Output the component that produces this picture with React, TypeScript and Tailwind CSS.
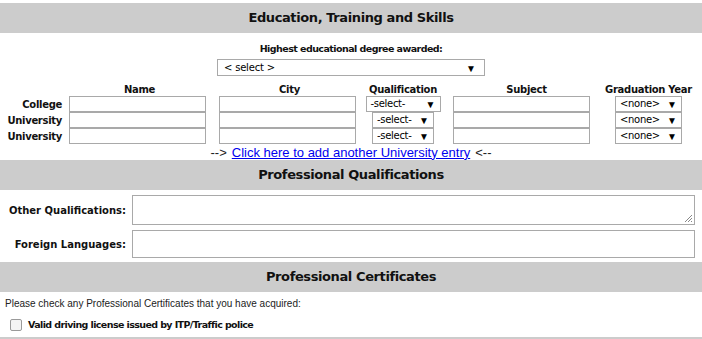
import React from "react";

const F = { fontFamily: '"DejaVu Sans", Verdana, sans-serif' };

function Header({ title }: { title: string }) {
  return (
    <div className="h-[30px] bg-[#cccccc] flex items-center justify-center">
      <span className="text-[13px] font-bold tracking-[-0.4px] text-[#111]" style={F}>{title}</span>
    </div>
  );
}

function Sel({ label, w }: { label: string; w: string }) {
  return (
    <div className={`${w} h-[16px] border border-[#a9a9a9] bg-white flex items-center justify-between pl-[4px] pr-[4px]`}>
      <span className="text-[10px] leading-none text-black tracking-[-0.3px]" style={F}>{label}</span>
      <span className="text-[10px] leading-none text-black">▼</span>
    </div>
  );
}

function Inp() {
  return <div className="w-[137px] h-[16px] border border-[#a9a9a9] bg-white" />;
}

function Row({ label, qual }: { label: string; qual: string }) {
  return (
    <div className="flex items-center h-[16px]">
      <div className="w-[63px] pr-[1px] text-right text-[10px] font-bold tracking-[-0.3px] text-[#111]" style={F}>{label}</div>
      <div className="w-[147px] flex justify-start pl-[6px]"><Inp /></div>
      <div className="w-[148px] flex justify-start pl-[9px]"><Inp /></div>
      <div className="w-[90px] flex justify-center"><Sel label="-select-" w={qual} /></div>
      <div className="w-[154px] flex justify-start pl-[5px]"><Inp /></div>
      <div className="w-[93px] flex justify-center"><Sel label="<none>" w="w-[67px]" /></div>
    </div>
  );
}

export default function App() {
  return (
    <div className="w-[702px] h-[339px] bg-white overflow-hidden pt-[3px]">
      <Header title="Education, Training and Skills" />
      <div className="flex flex-col items-center pt-[10px]">
        <div className="text-[9.5px] font-bold tracking-[-0.55px] text-[#111] leading-[12px]" style={F}>Highest educational degree awarded:</div>
        <div className="mt-[4px] w-[268px] h-[17px] border border-[#a9a9a9] flex items-center justify-between pl-[6px] pr-[8px]">
          <span className="text-[10px] leading-none tracking-[-0.2px]" style={F}>&lt; select &gt;</span>
          <span className="text-[10px] leading-none">▼</span>
        </div>
      </div>
      <div className="mt-[6px]">
        <div className="flex items-center h-[14px] text-[10px] font-bold tracking-[-0.3px] text-[#111]" style={F}>
          <div className="w-[63px]" />
          <div className="w-[147px] text-center pl-[6px]">Name</div>
          <div className="w-[148px] text-center pl-[11px]">City</div>
          <div className="w-[90px] text-center">Qualification</div>
          <div className="w-[154px] text-center pl-[3px]">Subject</div>
          <div className="w-[93px] text-center">Graduation Year</div>
        </div>
        <Row label="College" qual="w-[75px]" />
        <Row label="University" qual="w-[62px]" />
        <Row label="University" qual="w-[62px]" />
        <div className="flex justify-center items-center h-[16px] text-[13px] leading-none" style={{ fontFamily: '"Liberation Sans", Arial, sans-serif' }}>
          <span className="mr-[5px] text-[#222]">--&gt;</span>
          <span className="text-[#0000ee] underline">Click here to add another University entry</span>
          <span className="ml-[5px] text-[#222]">&lt;--</span>
        </div>
      </div>
      <Header title="Professional Qualifications" />
      <div className="flex items-center mt-[5px] h-[30px]">
        <div className="w-[126px] text-right text-[10px] font-bold text-[#111]" style={F}>Other Qualifications:</div>
        <div className="ml-[6px] w-[563px] h-[30px] border border-[#a9a9a9] relative">
          <svg className="absolute right-[1px] bottom-[1px]" width="9" height="9" viewBox="0 0 9 9">
            <line x1="8" y1="1" x2="1" y2="8" stroke="#888" strokeWidth="1" />
            <line x1="8" y1="4" x2="4" y2="8" stroke="#888" strokeWidth="1" />
            <line x1="8" y1="7" x2="7" y2="8" stroke="#888" strokeWidth="1" />
          </svg>
        </div>
      </div>
      <div className="flex items-center mt-[5px] h-[28px]">
        <div className="w-[126px] text-right text-[10px] font-bold text-[#111]" style={F}>Foreign Languages:</div>
        <div className="ml-[6px] w-[563px] h-[28px] border border-[#a9a9a9]" />
      </div>
      <div className="mt-[4px]">
        <Header title="Professional Certificates" />
      </div>
      <div className="pl-[5px] mt-[5px] text-[10px] leading-[13px] text-[#222]" style={{ fontFamily: '"Liberation Sans", Arial, sans-serif' }}>
        Please check any Professional Certificates that you have acquired:
      </div>
      <div className="flex items-center pl-[10px] mt-[8px] h-[14px]">
        <div className="w-[12px] h-[12px] rounded-[2px] border border-[#9a9a9a] bg-[#f4f4f4]" />
        <span className="ml-[6px] text-[9.5px] font-bold tracking-[-0.6px] text-[#111]" style={F}>Valid driving license issued by ITP/Traffic police</span>
      </div>
      <div className="mt-[5px] h-[2px] bg-[#cccccc]" />
    </div>
  );
}
